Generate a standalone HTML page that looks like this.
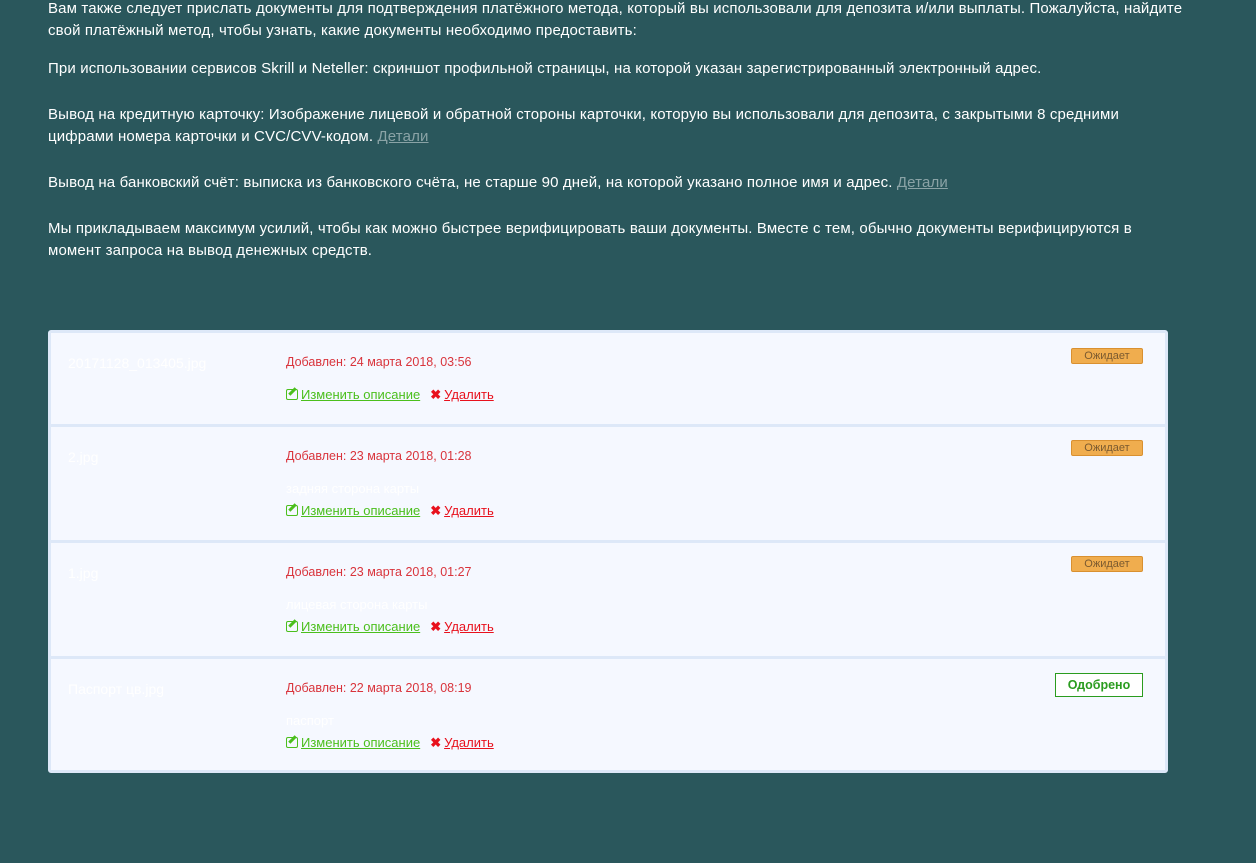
<!DOCTYPE html>
<html><head><meta charset="utf-8"><style>
*{margin:0;padding:0;box-sizing:border-box}
body{width:1256px;height:863px;background:#2a575c;font-family:"Liberation Sans","Noto Sans CJK SC",sans-serif;color:#fff;overflow:hidden;position:relative}
.t{position:absolute;left:48px;font-size:15px;line-height:22px;white-space:nowrap;letter-spacing:0.14px}
.t a{color:#8aa3a6;text-decoration:underline}
.card{position:absolute;left:48px;top:330px;width:1120px;height:443px;background:#f5f8ff;border:3px solid #dde8f8;border-radius:3px}
.row{position:absolute;left:0;width:1114px;border-bottom:3px solid #dde8f8}
.fn{position:absolute;left:17px;font-size:14px;color:#fff}
.date{position:absolute;left:235px;font-size:12.5px;color:#d9343c}
.desc{position:absolute;left:235px;font-size:13px;color:#fff}
.act{position:absolute;left:235px;font-size:13px;white-space:nowrap}
.act .e{color:#4bbf1d;text-decoration:underline}
.act .d{color:#e8111d;text-decoration:underline}
.act .x{color:#e8111d;font-weight:bold;margin:0 3px 0 10px}
.ic{display:inline-block;width:12px;height:11px;border:1.5px solid #4bbf1d;border-radius:2px;vertical-align:-1px;margin-right:3px;position:relative}
.ic:after{content:"";position:absolute;left:4px;top:-3px;width:3px;height:9px;background:#4bbf1d;transform:rotate(45deg)}
.badge{position:absolute;left:1020px;width:72px;height:16px;background:#f0ad4e;border:1px solid #d99030;border-radius:2px;font-size:11px;color:#7a5a30;text-align:center;line-height:14px}
.ok{position:absolute;left:1004px;width:88px;height:24px;border:1px solid #2a9c1f;background:#fff;color:#2a9c1f;font-weight:bold;font-size:12.5px;text-align:center;line-height:22px}
</style></head><body>
<div class="t" style="top:-2px">Вам также следует прислать документы для подтверждения платёжного метода, который вы использовали для депозита и/или выплаты. Пожалуйста, найдите<br>свой платёжный метод, чтобы узнать, какие документы необходимо предоставить:</div>
<div class="t" style="top:58px">При использовании сервисов Skrill и Neteller: скриншот профильной страницы, на которой указан зарегистрированный электронный адрес.</div>
<div class="t" style="top:104px">Вывод на кредитную карточку: Изображение лицевой и обратной стороны карточки, которую вы использовали для депозита, с закрытыми 8 средними<br>цифрами номера карточки и CVC/CVV-кодом. <a>Детали</a></div>
<div class="t" style="top:172px">Вывод на банковский счёт: выписка из банковского счёта, не старше 90 дней, на которой указано полное имя и адрес. <a>Детали</a></div>
<div class="t" style="top:218px">Мы прикладываем максимум усилий, чтобы как можно быстрее верифицировать ваши документы. Вместе с тем, обычно документы верифицируются в<br>момент запроса на вывод денежных средств.</div>
<div class="card">
 <div class="row" style="top:0;height:94px">
  <div class="fn" style="top:22px">20171128_013405.jpg</div>
  <div class="date" style="top:22px">Добавлен: 24 марта 2018, 03:56</div>
  <div class="act" style="top:54px"><span class="ic"></span><span class="e">Изменить описание</span><span class="x">✖</span><span class="d">Удалить</span></div>
  <div class="badge" style="top:15px">Ожидает</div>
 </div>
 <div class="row" style="top:94px;height:116px">
  <div class="fn" style="top:22px">2.jpg</div>
  <div class="date" style="top:22px">Добавлен: 23 марта 2018, 01:28</div>
  <div class="desc" style="top:54px">задняя сторона карты</div>
  <div class="act" style="top:76px"><span class="ic"></span><span class="e">Изменить описание</span><span class="x">✖</span><span class="d">Удалить</span></div>
  <div class="badge" style="top:13px">Ожидает</div>
 </div>
 <div class="row" style="top:210px;height:116px">
  <div class="fn" style="top:22px">1.jpg</div>
  <div class="date" style="top:22px">Добавлен: 23 марта 2018, 01:27</div>
  <div class="desc" style="top:54px">лицевая сторона карты</div>
  <div class="act" style="top:76px"><span class="ic"></span><span class="e">Изменить описание</span><span class="x">✖</span><span class="d">Удалить</span></div>
  <div class="badge" style="top:13px">Ожидает</div>
 </div>
 <div class="row" style="top:326px;height:114px;border-bottom:none">
  <div class="fn" style="top:22px">Паспорт цв.jpg</div>
  <div class="date" style="top:22px">Добавлен: 22 марта 2018, 08:19</div>
  <div class="desc" style="top:54px">паспорт</div>
  <div class="act" style="top:76px"><span class="ic"></span><span class="e">Изменить описание</span><span class="x">✖</span><span class="d">Удалить</span></div>
  <div class="ok" style="top:14px">Одобрено</div>
 </div>
</div>
</body></html>
